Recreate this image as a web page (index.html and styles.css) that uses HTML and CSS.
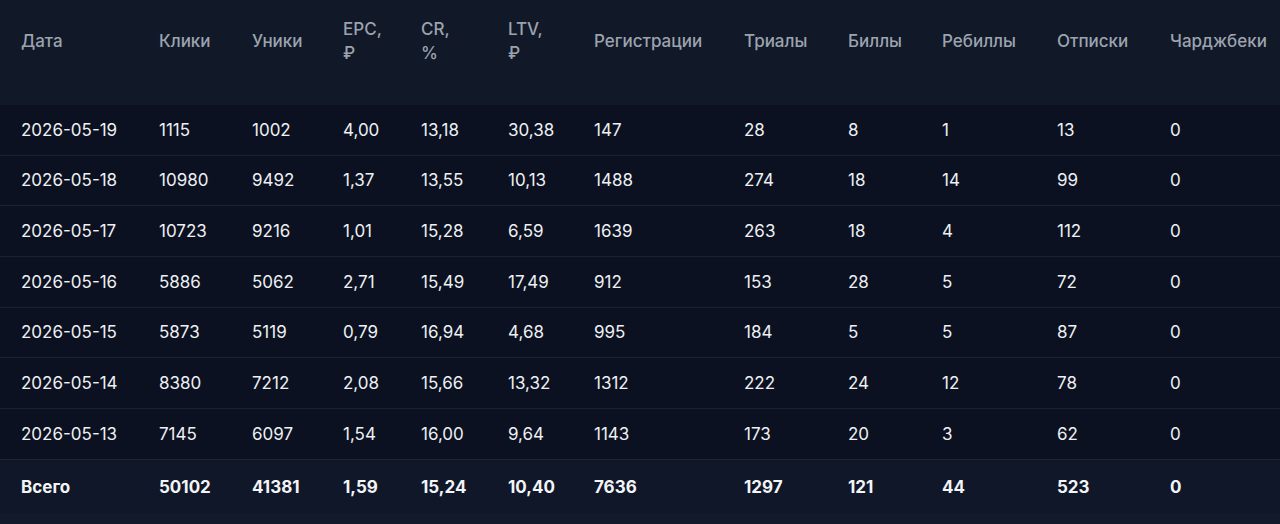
FILE: index.html
```html
<!DOCTYPE html>
<html lang="ru">
<head>
<meta charset="utf-8">
<title>Статистика</title>
<link rel="stylesheet" href="styles.css">
</head>
<body>
<div class="page">
<table class="stats">
<colgroup>
<col class="c-date"><col class="c-clicks"><col class="c-uniq"><col class="c-epc"><col class="c-cr"><col class="c-ltv"><col class="c-reg"><col class="c-trial"><col class="c-bill"><col class="c-rebill"><col class="c-unsub"><col class="c-cb">
</colgroup>
<thead>
<tr>
<th>Дата</th><th>Клики</th><th>Уники</th><th>EPC,<br>₽</th><th>CR,<br>%</th><th>LTV,<br>₽</th><th>Регистрации</th><th>Триалы</th><th>Биллы</th><th>Ребиллы</th><th>Отписки</th><th>Чарджбеки</th>
</tr>
</thead>
<tbody>
<tr><td>2026-05-19</td><td>1115</td><td>1002</td><td>4,00</td><td>13,18</td><td>30,38</td><td>147</td><td>28</td><td>8</td><td>1</td><td>13</td><td>0</td></tr>
<tr><td>2026-05-18</td><td>10980</td><td>9492</td><td>1,37</td><td>13,55</td><td>10,13</td><td>1488</td><td>274</td><td>18</td><td>14</td><td>99</td><td>0</td></tr>
<tr><td>2026-05-17</td><td>10723</td><td>9216</td><td>1,01</td><td>15,28</td><td>6,59</td><td>1639</td><td>263</td><td>18</td><td>4</td><td>112</td><td>0</td></tr>
<tr><td>2026-05-16</td><td>5886</td><td>5062</td><td>2,71</td><td>15,49</td><td>17,49</td><td>912</td><td>153</td><td>28</td><td>5</td><td>72</td><td>0</td></tr>
<tr><td>2026-05-15</td><td>5873</td><td>5119</td><td>0,79</td><td>16,94</td><td>4,68</td><td>995</td><td>184</td><td>5</td><td>5</td><td>87</td><td>0</td></tr>
<tr><td>2026-05-14</td><td>8380</td><td>7212</td><td>2,08</td><td>15,66</td><td>13,32</td><td>1312</td><td>222</td><td>24</td><td>12</td><td>78</td><td>0</td></tr>
<tr><td>2026-05-13</td><td>7145</td><td>6097</td><td>1,54</td><td>16,00</td><td>9,64</td><td>1143</td><td>173</td><td>20</td><td>3</td><td>62</td><td>0</td></tr>
</tbody>
<tfoot>
<tr><td>Всего</td><td>50102</td><td>41381</td><td>1,59</td><td>15,24</td><td>10,40</td><td>7636</td><td>1297</td><td>121</td><td>44</td><td>523</td><td>0</td></tr>
</tfoot>
</table>
</div>
</body>
</html>
```
FILE: styles.css
```css
html, body {
  margin: 0;
  padding: 0;
  background: #121a2c;
}
body {
  font-family: Inter, "Noto Sans", sans-serif;
  color: #e5e7eb;
}
.page {
  width: 1280px;
  height: 524px;
  background: #121a2c;
}
.stats {
  width: 1280px;
  border-collapse: collapse;
  table-layout: fixed;
  font-size: 17px;
}
.c-date { width: 138px; }
.c-clicks { width: 93px; }
.c-uniq { width: 91px; }
.c-epc { width: 78px; }
.c-cr { width: 87px; }
.c-ltv { width: 86px; }
.c-reg { width: 150px; }
.c-trial { width: 104px; }
.c-bill { width: 94px; }
.c-rebill { width: 115px; }
.c-unsub { width: 113px; }
.c-cb { width: 131px; }

.stats th {
  background: #111827;
  color: #9ca3af;
  font-weight: 500;
  text-align: left;
  line-height: 24px;
  padding: 17px 0 40px 21px;
  vertical-align: middle;
  white-space: nowrap;
}
.stats td {
  padding: 0 0 0 21px;
  height: 49.67px;
  line-height: 24px;
  white-space: nowrap;
  color: #eef0f3;
}
.stats tbody td {
  background: #0b1120;
  border-top: 1px solid #1b2333;
}
.stats tbody tr:first-child td {
  border-top: none;
}
.stats tfoot td {
  background: #0f1729;
  border-top: 1px solid #1e2738;
  font-weight: 700;
  height: 51px;
  padding-top: 2px;
  color: #f3f4f6;
}
```
